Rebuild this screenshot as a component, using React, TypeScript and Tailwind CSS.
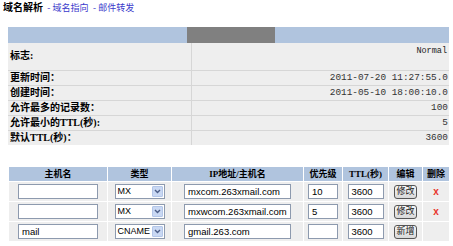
import React from "react";

const cjkSerif = { fontFamily: '"Liberation Serif", "Noto Sans CJK SC", serif' };
const sans = { fontFamily: '"Liberation Sans", "Noto Sans CJK SC", sans-serif' };
const mono = { fontFamily: '"Liberation Mono", monospace' };

function Input({ w, value }: { w: string; value?: string }) {
  return (
    <div
      className={`${w} h-[15px] mx-auto border border-[#8d9aae] bg-white text-left pl-[3px] text-[9.5px] leading-[13px] text-black whitespace-nowrap overflow-hidden`}
      style={sans}
    >
      {value}
    </div>
  );
}

function FakeSelect({ value }: { value: string }) {
  return (
    <div
      className="w-[50px] h-[15px] mx-auto border border-[#8d9aae] bg-white flex items-center justify-between pl-[2px] pr-[1px] text-[9px] text-black"
      style={sans}
    >
      <span className="leading-[13px] whitespace-nowrap">{value}</span>
      <span className="shrink-0 w-[11px] h-[11px] bg-[#c9d8f3] border border-[#b3c6e8] rounded-[1px] flex items-center justify-center">
        <svg width="7" height="5" viewBox="0 0 7 5">
          <path d="M1 1 L3.5 3.5 L6 1" fill="none" stroke="#4b5d86" strokeWidth="1.4" />
        </svg>
      </span>
    </div>
  );
}

function Btn({ label }: { label: string }) {
  return (
    <div
      className="flex mx-auto items-center justify-center w-[23px] h-[14px] border border-[#555] rounded-[3px] bg-gradient-to-b from-[#f7f7f7] to-[#d9d9d9] text-[9px] leading-none text-[#222]"
      style={cjkSerif}
    >
      {label}
    </div>
  );
}

export default function App() {
  const infoRows: [string, string][] = [
    ["更新时间：", "2011-07-20 11:27:55.0"],
    ["创建时间：", "2011-05-10 18:00:10.0"],
    ["允许最多的记录数：", "100"],
    ["允许最小的TTL(秒):", "5"],
    ["默认TTL(秒)：", "3600"],
  ];

  const recs = [
    { host: "", type: "MX", ip: "mxcom.263xmail.com", pri: "10", ttl: "3600", btn: "修改", del: true },
    { host: "", type: "MX", ip: "mxwcom.263xmail.com", pri: "5", ttl: "3600", btn: "修改", del: true },
    { host: "mail", type: "CNAME", ip: "gmail.263.com", pri: "", ttl: "3600", btn: "新增", del: false },
  ];

  const cell = "p-0 h-[20px] border border-white text-center align-middle leading-none";

  return (
    <div className="w-[453px] h-[246px] bg-white overflow-hidden leading-none">
      {/* nav */}
      <div className="flex items-center h-[15px] pl-[3px] pt-[1px]" style={cjkSerif}>
        <span className="text-[10px] font-bold text-black">域名解析</span>
        <span className="text-[9px] text-[#3a3acb] ml-[2px]">&nbsp;- 域名指向&nbsp;&nbsp;- 邮件转发</span>
      </div>

      {/* info table */}
      <table className="ml-[8px] mt-[12px] w-[441px] border-collapse bg-[#eeeeee]" style={cjkSerif}>
        <tbody>
          <tr>
            <td colSpan={2} className="h-[16px] p-0 bg-[#b0c4de]">
              <div className="ml-[179px] w-[88px] h-[16px] bg-[#808080]" />
            </td>
          </tr>
          <tr>
            <td className="w-[183px] h-[27px] p-0 pl-[2px] border-r border-b border-[#d6d6d6] text-[10px] font-bold text-black align-middle">
              标志:
            </td>
            <td className="p-0 pr-[2px] pt-[4px] border-b border-[#d6d6d6] text-right align-top text-[8.5px] text-[#222]" style={mono}>
              Normal
            </td>
          </tr>
          {infoRows.map(([k, v], i) => (
            <tr key={i}>
              <td
                className={`p-0 h-[15px] pl-[2px] border-r border-[#d6d6d6] text-[10px] font-bold text-black leading-none ${i < 4 ? "border-b" : ""}`}
              >
                {k}
              </td>
              <td
                className={`p-0 pr-[1px] text-right text-[9.4px] text-[#333] leading-none border-[#d6d6d6] ${i < 4 ? "border-b" : ""}`}
                style={mono}
              >
                {v}
              </td>
            </tr>
          ))}
        </tbody>
      </table>

      {/* records table */}
      <table className="ml-[8px] mt-[21px] w-[441px] border-collapse table-fixed" style={cjkSerif}>
        <colgroup>
          <col className="w-[99px]" />
          <col className="w-[64px]" />
          <col className="w-[132px]" />
          <col className="w-[39px]" />
          <col className="w-[46px]" />
          <col className="w-[34px]" />
          <col className="w-[27px]" />
        </colgroup>
        <thead>
          <tr className="bg-[#b0c4de] text-[9px] font-bold text-black">
            {["主机名", "类型", "IP地址/主机名", "优先级", "TTL(秒)", "编辑", "删除"].map((h) => (
              <th key={h} className="p-0 h-[15px] border border-white text-center align-middle leading-none">
                {h}
              </th>
            ))}
          </tr>
        </thead>
        <tbody>
          {recs.map((r, i) => (
            <tr key={i} className="bg-[#eeeeee]">
              <td className={cell}>
                <Input w="w-[80px]" value={r.host} />
              </td>
              <td className={cell}>
                <FakeSelect value={r.type} />
              </td>
              <td className={cell}>
                <Input w="w-[107px]" value={r.ip} />
              </td>
              <td className={cell}>
                <Input w="w-[30px]" value={r.pri} />
              </td>
              <td className={cell}>
                <Input w="w-[36px]" value={r.ttl} />
              </td>
              <td className={cell}>
                <Btn label={r.btn} />
              </td>
              <td className={`${cell} text-[10px] font-bold text-[#e8352b]`} style={sans}>
                {r.del ? "x" : ""}
              </td>
            </tr>
          ))}
        </tbody>
      </table>
    </div>
  );
}
